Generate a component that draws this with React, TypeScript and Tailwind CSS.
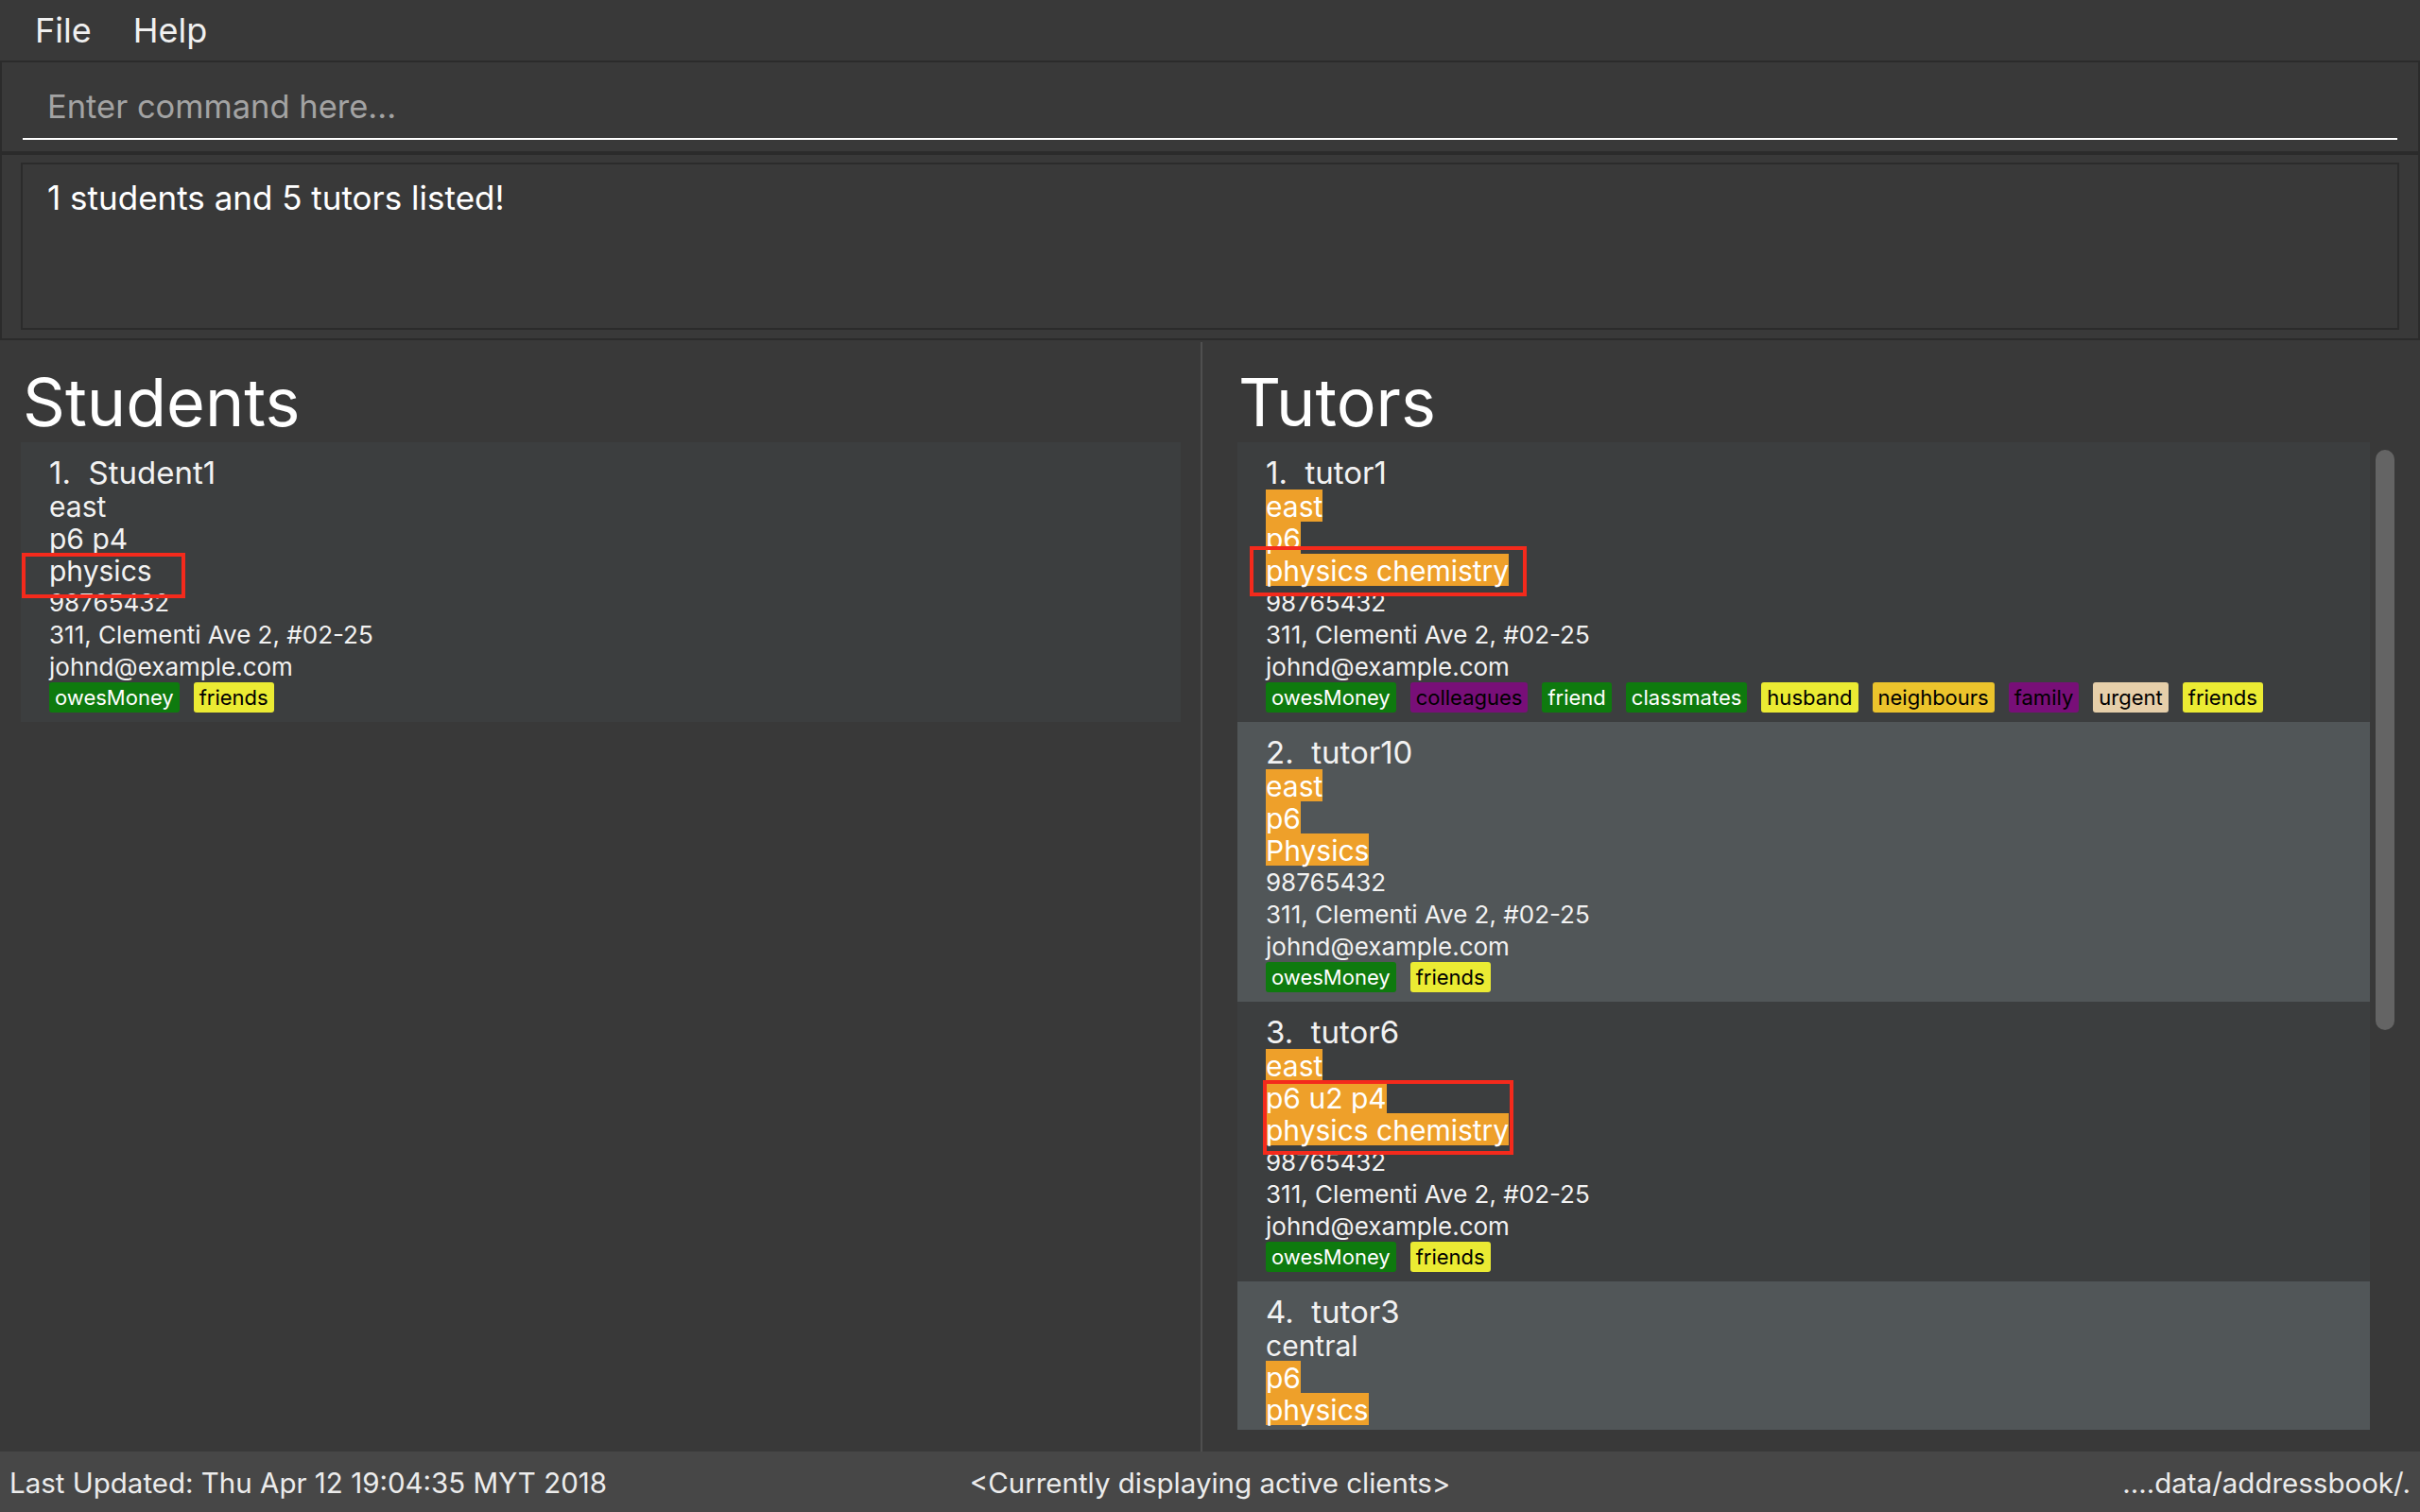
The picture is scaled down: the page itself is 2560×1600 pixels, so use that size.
import React from "react";

type Tag = { label: string; bg: string; fg: string };

const TAG = {
  owesMoney: { label: "owesMoney", bg: "bg-[#0e7a0e]", fg: "text-white" },
  friends: { label: "friends", bg: "bg-[#ebeb33]", fg: "text-black" },
  colleagues: { label: "colleagues", bg: "bg-[#780f78]", fg: "text-black" },
  friend: { label: "friend", bg: "bg-[#0e7a0e]", fg: "text-white" },
  classmates: { label: "classmates", bg: "bg-[#0e7a0e]", fg: "text-white" },
  husband: { label: "husband", bg: "bg-[#ebeb33]", fg: "text-black" },
  neighbours: { label: "neighbours", bg: "bg-[#ecc42c]", fg: "text-black" },
  family: { label: "family", bg: "bg-[#780f78]", fg: "text-black" },
  urgent: { label: "urgent", bg: "bg-[#e6cfaa]", fg: "text-black" },
};

type Line = { text: string; hl?: boolean; big?: boolean };

type Person = {
  idx: number;
  name: string;
  lines: Line[];
  tags: Tag[];
};

const common = (a: [string, boolean][]): Line[] => [
  ...a.map(([text, hl]) => ({ text, hl, big: true })),
  { text: "98765432" },
  { text: "311, Clementi Ave 2, #02-25" },
  { text: "johnd@example.com" },
];

const students: Person[] = [
  {
    idx: 1,
    name: "Student1",
    lines: common([
      ["east", false],
      ["p6 p4", false],
      ["physics", false],
    ]),
    tags: [TAG.owesMoney, TAG.friends],
  },
];

const tutors: Person[] = [
  {
    idx: 1,
    name: "tutor1",
    lines: common([
      ["east", true],
      ["p6", true],
      ["physics chemistry", true],
    ]),
    tags: [
      TAG.owesMoney,
      TAG.colleagues,
      TAG.friend,
      TAG.classmates,
      TAG.husband,
      TAG.neighbours,
      TAG.family,
      TAG.urgent,
      TAG.friends,
    ],
  },
  {
    idx: 2,
    name: "tutor10",
    lines: common([
      ["east", true],
      ["p6", true],
      ["Physics", true],
    ]),
    tags: [TAG.owesMoney, TAG.friends],
  },
  {
    idx: 3,
    name: "tutor6",
    lines: common([
      ["east", true],
      ["p6 u2 p4", true],
      ["physics chemistry", true],
    ]),
    tags: [TAG.owesMoney, TAG.friends],
  },
  {
    idx: 4,
    name: "tutor3",
    lines: common([
      ["central", false],
      ["p6", true],
      ["physics", true],
    ]),
    tags: [TAG.owesMoney, TAG.friends],
  },
];

function Card({ p, odd }: { p: Person; odd: boolean }) {
  return (
    <div
      className={`shrink-0 px-[30px] pt-[10px] pb-[10px] ${
        odd ? "bg-[#515658]" : "bg-[#3c3e3f]"
      }`}
    >
      <div className="h-[40px] text-[33px] leading-[44px] text-[#f2f2f2] whitespace-pre">
        {`${p.idx}.  ${p.name}`}
      </div>
      {p.lines.map((l, i) => (
        <div key={i} className="flex h-[34px]">
          <span
            className={`h-[34px] leading-[36px] whitespace-pre ${
              l.big ? "text-[30px]" : "text-[26px]"
            } ${l.hl ? "bg-[#eea02a] text-white" : "text-[#f2f2f2]"}`}
          >
            {l.text}
          </span>
        </div>
      ))}
      <div className="flex gap-[15px] h-[32px]">
        {p.tags.map((t, i) => (
          <span
            key={i}
            className={`${t.bg} ${t.fg} text-[22px] leading-[28px] py-[2px] px-[6px] rounded-[3px]`}
          >
            {t.label}
          </span>
        ))}
      </div>
    </div>
  );
}

export default function App() {
  return (
    <div
      className="relative w-[2560px] h-[1600px] flex flex-col bg-[#393939] text-white overflow-hidden"
      style={{ fontFamily: "Inter, 'Noto Sans', sans-serif" }}
    >
      {/* Menu bar */}
      <div className="h-[66px] shrink-0 flex items-center pl-[37px] gap-[44px] text-[36px] text-[#f0f0f0] border-b-2 border-[#2b2b2b]">
        <span>File</span>
        <span>Help</span>
      </div>

      {/* Command box */}
      <div className="h-[96px] shrink-0 border-x-2 border-b-2 border-[#2b2b2b] px-[22px]">
        <div className="h-[82px] flex items-end border-b-2 border-white">
          <span className="pl-[26px] pb-[11px] text-[34.5px] leading-[44px] text-[#a3a3a3]">
            Enter command here...
          </span>
        </div>
      </div>

      {/* Result display */}
      <div className="h-[198px] shrink-0 border-x-2 border-y-2 border-[#2b2b2b] px-[20px] pt-[8px] pb-[9px]">
        <div className="h-full border-2 border-[#2b2b2b] px-[26px] pt-[13px] text-[35px] leading-[44px] text-white">
          1 students and 5 tutors listed!
        </div>
      </div>

      {/* Main */}
      <div className="flex-1 flex min-h-0">
        <div className="w-[1270px] shrink-0 flex flex-col pl-[22px] pr-[21px]">
          <div className="h-[108px] shrink-0 pl-[2px] pt-[26px] text-[70px] leading-[80px]">
            Students
          </div>
          <div className="flex flex-col">
            {students.map((s, i) => (
              <Card key={i} p={s} odd={i % 2 === 1} />
            ))}
          </div>
        </div>
        <div className="w-[2px] shrink-0 bg-[#4f4f4f] mt-[2px]" />
        <div className="flex-1 flex flex-col pl-[37px] min-h-0 pb-[23px]">
          <div className="h-[108px] shrink-0 pl-[1px] pt-[26px] text-[70px] leading-[80px]">
            Tutors
          </div>
          <div className="flex-1 flex min-h-0">
            <div className="w-[1198px] flex flex-col overflow-hidden">
              {tutors.map((t, i) => (
                <Card key={i} p={t} odd={i % 2 === 1} />
              ))}
            </div>
            <div className="w-[26px] shrink-0 pl-[6px] pt-[8px]">
              <div className="w-[20px] h-[614px] rounded-[10px] bg-[#646464]" />
            </div>
          </div>
        </div>
      </div>

      {/* Status bar */}
      <div className="h-[64px] shrink-0 flex items-center bg-[#474747] text-[29.5px] text-[#ececec] px-[10px] pt-[2px]">
        <div className="flex-1">Last Updated: Thu Apr 12 19:04:35 MYT 2018</div>
        <div>&lt;Currently displaying active clients&gt;</div>
        <div className="flex-1 text-right">....data/addressbook/.</div>
      </div>

      {/* Annotation boxes */}
      <div className="absolute left-[23px] top-[585px] w-[173px] h-[48px] border-4 border-[#f42a1c]" />
      <div className="absolute left-[1322px] top-[578px] w-[293px] h-[53px] border-4 border-[#f42a1c]" />
      <div className="absolute left-[1336px] top-[1143px] w-[265px] h-[79px] border-4 border-[#f42a1c]" />
    </div>
  );
}
